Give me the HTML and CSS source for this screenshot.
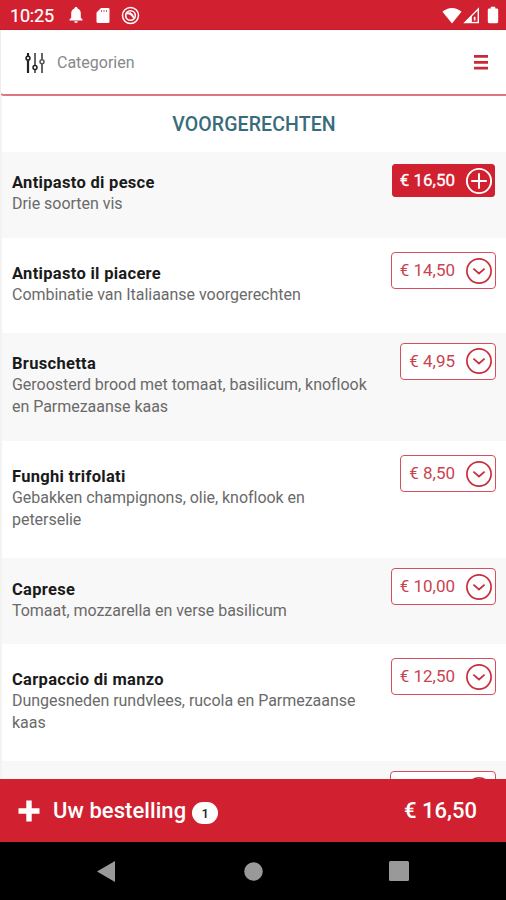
FILE: index.html
```html
<!DOCTYPE html>
<html lang="nl">
<head>
<meta charset="utf-8">
<title>Voorgerechten</title>
<link rel="stylesheet" href="styles.css">
</head>
<body>
<svg class="defs" width="0" height="0">
  <symbol id="chevron" viewBox="0 0 28 28"><circle cx="14" cy="14" r="12.1"/><path d="M8.4 11.600l5.600 4.900 5.600-4.900"/></symbol>
  <symbol id="plus" viewBox="0 0 28 28"><circle cx="14" cy="14" r="12.1"/><path d="M14 6.200v15.600M6.200 14h15.600"/></symbol>
</svg>
<div class="screen">
  <header class="status">
    <span class="clock">10:25</span>
    <svg class="bell" width="14" height="18" viewBox="0 0 14 18"><path d="M7 1c.9 0 1.500.6 1.500 1.400 2.200.7 3.300 2.500 3.300 4.800v4.500l1.700 1.700v1H.5v-1l1.700-1.700V7.200c0-2.300 1.100-4.100 3.300-4.800C5.500 1.600 6.100 1 7 1zM5.200 15.300h3.600a1.800 1.800 0 0 1-3.600 0z"/></svg>
    <svg class="sd" width="14" height="17" viewBox="0 0 14 17"><path fill-rule="evenodd" d="M5 1h7.300c.7 0 1.200.5 1.200 1.200v12.600c0 .7-.5 1.200-1.200 1.200H1.700c-.7 0-1.200-.5-1.200-1.200V5.500zM5 3.300v1.500h1V3.300zm2.500 0v1.500h1V3.300zM10 3.300v1.500h1V3.300z"/></svg>
    <svg class="disc" width="19" height="19" viewBox="0 0 19 19"><g fill="none" stroke="#fff"><circle cx="9.500" cy="9.500" r="8" stroke-width="1.500"/><circle cx="9.500" cy="9.500" r="4.800" stroke-width="1.600"/><path d="M5.700 7.500c2.500-.8 4.500 0 7.200 4.500M8.500 6.700l3.500 3" stroke-width="2"/></g></svg>
    <svg class="wifi" width="20" height="17" viewBox="0 0 20 17"><path d="M.5 4.800C5.800-.3 14.200-.3 19.500 4.800L10 16.500z"/></svg>
    <svg class="signal" width="17" height="17" viewBox="0 0 17 17"><path d="M15.300 2v13.500H2z" fill="none" stroke="#fff" stroke-width="1.400"/><path d="M1 16L8.800 8.200V16z"/><path d="M9 14.500V9.500L13.500 5v9.500z" fill="#d1202f"/><path d="M10.800 9.800h1.700v3.600h-1.700z"/></svg>
    <svg class="battery" width="12" height="18" viewBox="0 0 12 18"><path d="M3.800.8h4.400v1.800h1.600c.8 0 1.400.6 1.400 1.400v11.800c0 .8-.6 1.400-1.400 1.400H2.200c-.8 0-1.400-.6-1.400-1.400V4c0-.8.6-1.400 1.400-1.400h1.600z"/></svg>
  </header>
  <nav class="toolbar">
    <svg class="sliders" width="20" height="22" viewBox="0 0 20 22"><g fill="none" stroke="#222"><g stroke-width="2.200"><path d="M3 1v3M3 8.500V21"/><circle cx="3" cy="6.200" r="1.900" stroke-width="1.600"/></g><g stroke-width="1.800" stroke="#555"><path d="M10 1v12.500M10 18v3"/><circle cx="10" cy="15.600" r="2" stroke-width="1.500" stroke="#222"/><path d="M17 1v6.500M17 12v9"/><circle cx="17" cy="9.700" r="2" stroke-width="1.500"/></g></g></svg>
    <span class="filter">Categorien</span>
    <svg class="menu" width="16" height="16" viewBox="0 0 16 16"><path d="M1 1h14v2.800H1zM1 7h14v2.700H1zM1 12.700h14v2.700H1z"/></svg>
  </nav>
  <main class="list">
    <h1>VOORGERECHTEN</h1>
    <section class="item"><div class="text"><h2>Antipasto di pesce</h2><p>Drie soorten vis</p></div><button class="price active"><span>€ 16,50</span><svg><use href="#plus"/></svg></button></section>
    <section class="item"><div class="text"><h2>Antipasto il piacere</h2><p>Combinatie van Italiaanse voorgerechten</p></div><button class="price"><span>€ 14,50</span><svg><use href="#chevron"/></svg></button></section>
    <section class="item"><div class="text"><h2>Bruschetta</h2><p>Geroosterd brood met tomaat, basilicum, knoflook<br>en Parmezaanse kaas</p></div><button class="price"><span>€ 4,95</span><svg><use href="#chevron"/></svg></button></section>
    <section class="item"><div class="text"><h2>Funghi trifolati</h2><p>Gebakken champignons, olie, knoflook en<br>peterselie</p></div><button class="price"><span>€ 8,50</span><svg><use href="#chevron"/></svg></button></section>
    <section class="item"><div class="text"><h2>Caprese</h2><p>Tomaat, mozzarella en verse basilicum</p></div><button class="price"><span>€ 10,00</span><svg><use href="#chevron"/></svg></button></section>
    <section class="item"><div class="text"><h2>Carpaccio di manzo</h2><p>Dungesneden rundvlees, rucola en Parmezaanse<br>kaas</p></div><button class="price"><span>€ 12,50</span><svg><use href="#chevron"/></svg></button></section>
    <section class="item"><div class="text"></div><button class="price next"><svg><use href="#chevron"/></svg></button></section>
  </main>
  <footer class="order">
    <svg class="add" width="22" height="22" viewBox="0 0 22 22"><path d="M8.300.5h5.400v7.800h7.800v5.400h-7.800v7.800H8.300v-7.800H.5V8.300h7.800z"/></svg>
    <span class="order-label">Uw bestelling</span>
    <span class="badge">1</span>
    <span class="total">€ 16,50</span>
  </footer>
  <div class="navbar">
    <svg width="18" height="21" viewBox="0 0 18 21"><path d="M18 0v21L0 10.500z"/></svg>
    <svg class="home" width="19" height="19" viewBox="0 0 19 19"><circle cx="9.500" cy="9.500" r="9.300"/></svg>
    <svg width="20" height="20" viewBox="0 0 20 20"><rect width="20" height="20" rx="1.500"/></svg>
  </div>
</div>
</body>
</html>
```
FILE: styles.css
```css
* { box-sizing: border-box; }
body { margin: 0; font-family: Roboto, "Liberation Sans", sans-serif; background: #fff; }
.defs { display: block; height: 0; }
.screen { width: 506px; height: 900px; display: flex; flex-direction: column; overflow: hidden; }
svg { flex: none; }

.status { height: 30px; flex: none; background: #d1202f; border-bottom: 1px solid #c61c2a; display: flex; align-items: center; padding: 1px 7px 0 10px; color: #fff; fill: #fff; }
.clock { font-size: 18px; width: 59px; letter-spacing: -0.2px; -webkit-text-stroke: 0.2px #fff; }
.sd { margin-left: 13px; }
.disc { margin-left: 11px; }
.wifi { margin-left: auto; }
.signal { margin-left: 1px; }
.battery { margin-left: 7px; }

.toolbar { height: 66px; flex: none; display: flex; align-items: center; padding: 2px 17px 0 24px; border-bottom: 2px solid #dc7781; border-left: 1px solid #eee; border-bottom-left-radius: 4px; }
.filter { margin: 0 0 1px 12px; font-size: 16px; color: #888; }
.menu { margin: 0 0 2px auto; fill: #cc2936; }

.list { flex: 1; min-height: 0; overflow: hidden; border-left: 2px solid #f3f3f3; }
h1 { margin: 0; height: 56px; text-align: center; line-height: 57px; font-size: 19.500px; font-weight: 500; letter-spacing: 0.1px; color: #386c7c; }
.item { display: flex; justify-content: space-between; align-items: flex-start; min-height: 86px; margin-bottom: 4.300px; padding: 10px 10px 0 10px; }
.item:nth-of-type(odd) { background: #f8f8f8; }
.text { padding: 10.400px 0 22.100px; }
h2 { margin: 0; font-size: 16.500px; line-height: 22px; font-weight: 700; color: #1a1a1a; letter-spacing: 0.3px; }
p { margin: -1px 0 0; font-size: 16px; line-height: 22.500px; color: #6a6a6a; letter-spacing: -0.03px; white-space: nowrap; }
.price { flex: none; height: 37px; display: flex; align-items: center; gap: 10px; border: 1.500px solid #d5505c; border-radius: 4px; background: #fff; color: #ca4450; padding: 0 2px 1px 8px; font: 17px Roboto, sans-serif; }
.price svg { width: 28px; height: 28px; fill: none; stroke: #c92e3b; stroke-width: 1.700; position: relative; top: 0.5px; }
.price.active { height: 33px; margin: 2px 1px 0 0; padding: 0 1px 1px 7px; border-color: #d1202f; border-radius: 3px; background: #d1202f; color: #fff; -webkit-text-stroke: 0.3px #fff; }
.price.active svg { stroke: #fff; stroke-width: 1.900; }
.next { width: 106px; justify-content: flex-end; }

.order { height: 63px; flex: none; background: #d1202f; color: #fff; fill: #fff; display: flex; align-items: center; padding: 0 29px 0 18px; }
.order-label { margin-left: 13px; font-size: 22px; font-weight: 500; letter-spacing: 0.07px; }
.badge { margin: 5px 0 0 6px; width: 26px; height: 22px; border-radius: 11px; background: #fff; color: #222; font-size: 13px; font-weight: 500; line-height: 23px; text-align: center; }
.total { margin-left: auto; font-size: 22px; font-weight: 500; }
.navbar { height: 58px; flex: none; background: #000; fill: #999; display: flex; align-items: center; justify-content: space-between; padding: 0 97px; }
.home { margin-left: 2px; }
```
